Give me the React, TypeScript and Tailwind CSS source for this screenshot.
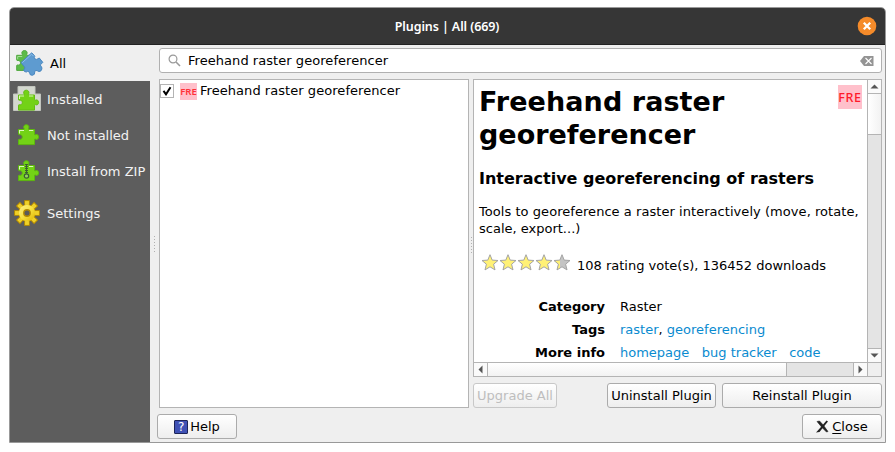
import React from "react";

const PIECE =
  "M1.500 5.500H6.600C7.500 5.500 7.200 4.700 6.800 3.900C6.200 2.200 7.400.7 9.300.7S12.400 2.200 11.800 3.900C11.400 4.700 11.100 5.500 12 5.500H17.500V10C17.500 11 18 10.900 18.900 10.500C20.400 10 21.600 11.200 21.600 12.900S20.400 15.800 18.900 15.300C18 14.900 17.500 14.800 17.500 15.800V20.600H1.500V15.800C1.500 15.100 2.200 15.100 2.900 15.300C4.200 15.600 5.300 14.500 5.300 13S4.200 10.400 2.900 10.700C2.200 10.900 1.500 10.800 1.500 10.100Z";

const STAR = "M9 1.200L11.200 6.600L17 7L12.600 10.700L14 16.400L9 13.300L4 16.400L5.400 10.700L1 7L6.800 6.600Z";

function Piece({ zip = false }: { zip?: boolean }) {
  return (
    <svg width="22" height="22" viewBox="0 0 22 22" className="ml-px block">
      <path d={PIECE} fill="#73d216" stroke="#5db80f" strokeWidth="1" />
      <path d="M2.500 9.500V6.500H7M12 6.500H16.200" fill="none" stroke="#dcfabc" strokeWidth="1.100" />
      {zip && (
        <g fill="none" stroke="#3c5c34">
          <path d="M9.500 4V14" strokeWidth="3" strokeDasharray="1 1" />
          <path d="M9.500 4V14" strokeWidth="1" />
          <circle cx="9.500" cy="16" r="2.200" fill="#8fd45c" strokeWidth="1.200" />
        </g>
      )}
    </svg>
  );
}

function AllIcon() {
  return (
    <svg width="30" height="30" viewBox="0 0 30 30" className="block">
      <g transform="translate(.2 1.800)">
        <path d={PIECE} fill="#5cbb48" stroke="#4fa83e" />
        <path d="M2.500 9.500V6.700H7" fill="none" stroke="#a6dd98" />
      </g>
      <path
        d="M6 14.500L16.700 4.800L19.400 7.500Q20.200 8.500 19.300 9.600Q19.500 11.500 21.500 11.400Q22.500 11 24.300 10L27.800 14.300L25.500 16.800Q25.200 18 26.700 19Q27.500 21 25.900 22.900Q23.800 24.200 22.200 22.700Q21 22 19.800 23.200L19.400 26.200Q17.500 28.200 15.200 26.700Q14.800 25 14 23.800Q12.700 22.800 11.400 24Q9.200 24.200 8.600 22Q10 20.500 9.700 19.200Z"
        fill="#5e9bd0"
        stroke="#4a87bf"
        strokeWidth="1"
        strokeLinejoin="round"
      />
      <path d="M7.200 14.700L16.600 6.200L18.400 8" fill="none" stroke="#8fc0ea" strokeWidth="1" />
    </svg>
  );
}

function InstalledIcon() {
  return (
    <svg width="28" height="26" viewBox="0 0 28 26" className="block">
      <path d="M5 .5H22V8H27.500V24.500H.5V8H5Z" fill="#d3d7cf" stroke="#c2c5be" />
      <g transform="translate(4 3.500)">
        <path d={PIECE} fill="#73d216" stroke="#62bb10" />
        <path d="M2.500 9.500V6.500H7M12 6.500H16.200" fill="none" stroke="#dcfabc" strokeWidth="1.100" />
      </g>
    </svg>
  );
}

function Gear() {
  const teeth = [0, 45, 90, 135, 180, 225, 270, 315];
  return (
    <svg width="26" height="26" viewBox="0 0 26 26" className="block">
      <defs>
        <linearGradient id="gold" x1="0" y1="0" x2="1" y2="1">
          <stop offset="0" stopColor="#fff08a" />
          <stop offset=".5" stopColor="#f7e040" />
          <stop offset="1" stopColor="#deb400" />
        </linearGradient>
      </defs>
      <g fill="#e9c615" stroke="#b48a00" strokeWidth="1">
        {teeth.map((a) => (
          <path key={a} d="M10.800 6L10.600 .6H15.400L15.200 6Z" transform={`rotate(${a} 13 13)`} />
        ))}
      </g>
      <circle cx="13" cy="13" r="8.600" fill="#c49a00" />
      <g fill="#efd028">
        {teeth.map((a) => (
          <path key={a} d="M11.300 7L11.100 1.200H14.900L14.700 7Z" transform={`rotate(${a} 13 13)`} />
        ))}
      </g>
      <circle cx="13" cy="13" r="8" fill="url(#gold)" />
      <circle cx="13" cy="13" r="3.200" fill="#5b5b5b" stroke="#b48a00" strokeWidth="1.400" />
    </svg>
  );
}

function Stars() {
  return (
    <svg width="90" height="18" viewBox="0 0 90 18" className="block">
      {[0, 1, 2, 3, 4].map((i) => (
        <g key={i} transform={`translate(${i * 18} .5)`}>
          <path d={STAR} fill={i < 4 ? "#fff176" : "#c4c4c4"} />
          {i === 4 && <path d="M7 6.600L1 7L5.400 10.700L4 16.400L7 14.500Z" fill="#fff176" />}
          <path d={STAR} fill="none" stroke="#a4a4a4" strokeWidth="1" strokeLinejoin="round" />
        </g>
      ))}
    </svg>
  );
}

function NavItem({ icon, label, active = false }: { icon: React.ReactNode; label: string; active?: boolean }) {
  return (
    <div className={`flex h-9 shrink-0 items-center ${active ? "bg-[#efefef] pl-[5px] text-black" : "pl-[3px] text-[#f2f2f2]"}`}>
      <div className={`flex shrink-0 justify-center ${active ? "w-[30px]" : "w-7"}`}>{icon}</div>
      <span className={active ? "ml-[5px]" : "ml-[6px]"}>{label}</span>
    </div>
  );
}

function Button({ className, children }: { className: string; children: React.ReactNode }) {
  return (
    <button
      className={`flex h-[25px] shrink-0 items-center justify-center rounded-[3px] border bg-linear-to-b from-white to-[#eeeeee] ${className}`}
    >
      {children}
    </button>
  );
}

function Arrow({ d }: { d: string }) {
  return (
    <svg width="9" height="9" viewBox="0 0 9 9" className="block">
      <path d={d} fill="#555" />
    </svg>
  );
}

function Grip() {
  return (
    <div className="flex flex-col gap-[2px]">
      {[0, 1, 2, 3, 4, 5].map((i) => (
        <i key={i} className="block size-px bg-[#b0b0b0]" />
      ))}
    </div>
  );
}

export default function App() {
  return (
    <div className="h-[452px] w-[895px] overflow-hidden bg-white pt-[7px] pl-[9px] font-['DejaVu_Sans',sans-serif] text-[13px] leading-[17px] whitespace-nowrap text-black">
      <div className="flex h-[436px] w-[877px] flex-col overflow-hidden rounded-t-[5px] border border-[#999999] bg-[#efefef]">
        <header className="flex h-[37px] shrink-0 items-center border-b border-[#222222] bg-[#363636]">
          <span className="w-[845px] pl-[29px] text-center font-['Noto_Sans',sans-serif] text-[12.500px] font-semibold tracking-[-.1px] text-white">
            Plugins | All (669)
          </span>
          <svg width="20" height="20" viewBox="0 0 20 20" className="ml-[2px] block">
            <circle cx="10" cy="10" r="9.300" fill="#f58b2a" />
            <path d="M6.800 6.800L13.200 13.200M13.200 6.800L6.800 13.200" stroke="#fff" strokeWidth="2.300" />
          </svg>
        </header>

        <div className="flex min-h-0 flex-1">
          <nav className="flex w-[140px] shrink-0 flex-col bg-[#5d5d5d]">
            <NavItem active icon={<AllIcon />} label="All" />
            <NavItem icon={<InstalledIcon />} label="Installed" />
            <NavItem icon={<Piece />} label="Not installed" />
            <NavItem icon={<Piece zip />} label="Install from ZIP" />
            <div className="h-[6px] shrink-0" />
            <NavItem icon={<Gear />} label="Settings" />
          </nav>
          <div className="flex w-[9px] shrink-0 items-center pl-[4px]">
            <Grip />
          </div>

          <main className="flex w-[723px] flex-col pt-[3px]">
            <div className="flex h-[25px] shrink-0 items-center rounded-[3px] border border-[#b0b0b0] bg-white pr-[7px] pl-[8px]">
              <svg width="13" height="13" viewBox="0 0 13 13" className="block">
                <circle cx="5" cy="5" r="3.900" fill="none" stroke="#999" strokeWidth="1.200" />
                <path d="M8 8L12 12" stroke="#999" strokeWidth="1.600" />
              </svg>
              <span className="ml-[7px] flex-1 tracking-[.05px]">Freehand raster georeferencer</span>
              <svg width="14" height="10" viewBox="0 0 14 10" className="block">
                <path d="M0 5L4 0H13.500V10H4Z" fill="#949494" />
                <path d="M5.500 2L11.500 8M11.500 2L5.500 8" stroke="#fff" strokeWidth="1.100" />
              </svg>
            </div>

            <div className="mt-[6px] flex h-[329px] shrink-0">
              <section className="w-[310px] shrink-0 border border-[#b4b4b4] bg-white pt-[2px]">
                <div className="flex h-[18px] items-center">
                  <span className="flex size-[14px] items-center justify-center border border-[#b4b4b4] bg-white">
                    <svg width="10" height="10" viewBox="0 0 10 10" className="block">
                      <path d="M1.500 4.800L4 8.300L8.500 1.200" fill="none" stroke="#000" strokeWidth="2" />
                    </svg>
                  </span>
                  <span className="ml-[6px] flex size-[17px] items-center justify-center bg-[#ffc0cb] font-['Noto_Sans',sans-serif] text-[9.500px] font-semibold text-[#ff3038]">
                    FRE
                  </span>
                  <span className="mb-[2px] ml-[3px] tracking-[.05px]">Freehand raster georeferencer</span>
                </div>
              </section>
              <div className="w-[4px] shrink-0 pt-[158px] pl-[2px]">
                <Grip />
              </div>

              <div className="flex w-[409px] shrink-0 flex-col">
                <section className="flex h-[298px] shrink-0 flex-col border border-[#b4b4b4] bg-white">
                  <div className="flex h-[282px] shrink-0">
                    <article className="h-[282px] w-[393px] shrink-0 overflow-hidden pt-[5px] pl-[5px]">
                      <div className="flex justify-between pr-[5px]">
                        <h1 className="text-[27px] leading-[33px] font-bold tracking-[.08px]">
                          Freehand raster
                          <br />
                          <span className="tracking-normal">georeferencer</span>
                        </h1>
                        <span className="flex size-6 items-center justify-center bg-[#ffc0cb] font-['Noto_Sans',sans-serif] text-[12.500px] font-medium tracking-[.6px] text-[#ff1a2a]">
                          FRE
                        </span>
                      </div>
                      <h2 className="mt-[18px] text-[16px] leading-[20px] font-bold">Interactive georeferencing of rasters</h2>
                      <p className="mt-[14px]">
                        <span className="tracking-[.05px]">Tools to georeference a raster interactively (move, rotate,</span>
                        <br />
                        scale, export...)
                      </p>
                      <div className="mt-[16px] flex h-[24px] pl-[2px]">
                        <Stars />
                        <span className="mt-[4px] ml-[6px]">108 rating vote(s), 136452 downloads</span>
                      </div>
                      <div className="mt-[18px] grid grid-cols-[126px_1fr] gap-x-[15px] leading-[23px]">
                        <b className="text-right">Category</b>
                        <span>Raster</span>
                        <b className="text-right">Tags</b>
                        <span>
                          <a className="text-[#0a8bd0]">raster</a>, <a className="text-[#0a8bd0]">georeferencing</a>
                        </span>
                        <b className="text-right">More info</b>
                        <span className="flex gap-[12.500px] text-[#0a8bd0]">
                          <a>homepage</a>
                          <a>bug tracker</a>
                          <a>code</a>
                        </span>
                      </div>
                    </article>
                    <div className="flex w-[14px] shrink-0 flex-col border-l border-[#b4b4b4] bg-[#e4e4e4]">
                      <div className="flex h-[14px] shrink-0 items-center justify-center border-b border-[#b4b4b4] bg-[#fafafa]">
                        <Arrow d="M.5 6.500L4.500 2.500L8.500 6.500Z" />
                      </div>
                      <div className="h-[41px] shrink-0 border-b border-[#b4b4b4] bg-linear-to-r from-white to-[#f2f2f2]" />
                      <div className="flex-1" />
                      <div className="flex h-[14px] shrink-0 items-center justify-center border-t border-[#b4b4b4] bg-[#fafafa]">
                        <Arrow d="M.5 2.500L4.500 6.500L8.500 2.500Z" />
                      </div>
                    </div>
                  </div>
                  <div className="flex h-[14px] shrink-0 border-t border-[#b4b4b4] bg-[#e4e4e4]">
                    <div className="flex w-[14px] shrink-0 items-center justify-center border-r border-[#b4b4b4] bg-[#fafafa]">
                      <Arrow d="M6.500 .5L2.500 4.500L6.500 8.500Z" />
                    </div>
                    <div className="w-[299px] shrink-0 border-r border-[#b4b4b4] bg-linear-to-b from-white to-[#f2f2f2]" />
                    <div className="flex-1" />
                    <div className="flex w-[14px] shrink-0 items-center justify-center border-l border-[#b4b4b4] bg-[#fafafa]">
                      <Arrow d="M2.500 .5L6.500 4.500L2.500 8.500Z" />
                    </div>
                    <div className="w-[14px] shrink-0 border-l border-[#b4b4b4] bg-[#efefef]" />
                  </div>
                </section>
                <div className="mt-[6px] flex">
                  <Button className="w-[84px] border-[#c8c8c8] text-[#bebebe]">Upgrade All</Button>
                  <Button className="ml-[50px] w-[109px] border-[#ababab]">Uninstall Plugin</Button>
                  <Button className="ml-[6px] w-[160px] border-[#ababab]">Reinstall Plugin</Button>
                </div>
              </div>
            </div>

            <footer className="mt-[6px] -ml-[2px] flex justify-between">
              <Button className="w-[80px] border-[#ababab]">
                <span className="mr-[2px] flex size-[14px] items-center justify-center rounded-[1px] border border-[#1c2458] bg-[#3f51b5] text-[12px] leading-none text-white">
                  ?
                </span>
                Help
              </Button>
              <Button className="w-[80px] border-[#ababab]">
                <svg width="13" height="13" viewBox="0 0 13 13" className="mr-[3px] block">
                  <path d="M1 1.500L3.500 1L7 4.800L12 11.500L10.500 12L6 7.500Z" fill="#222" stroke="#222" strokeWidth=".6" />
                  <path d="M10.500 .5L12 1.500L7.500 7L3.500 12L0 12.500L4.500 7.500Z" fill="#222" />
                </svg>
                <span>
                  <span className="underline underline-offset-2">C</span>lose
                </span>
              </Button>
            </footer>
          </main>
        </div>
      </div>
    </div>
  );
}
